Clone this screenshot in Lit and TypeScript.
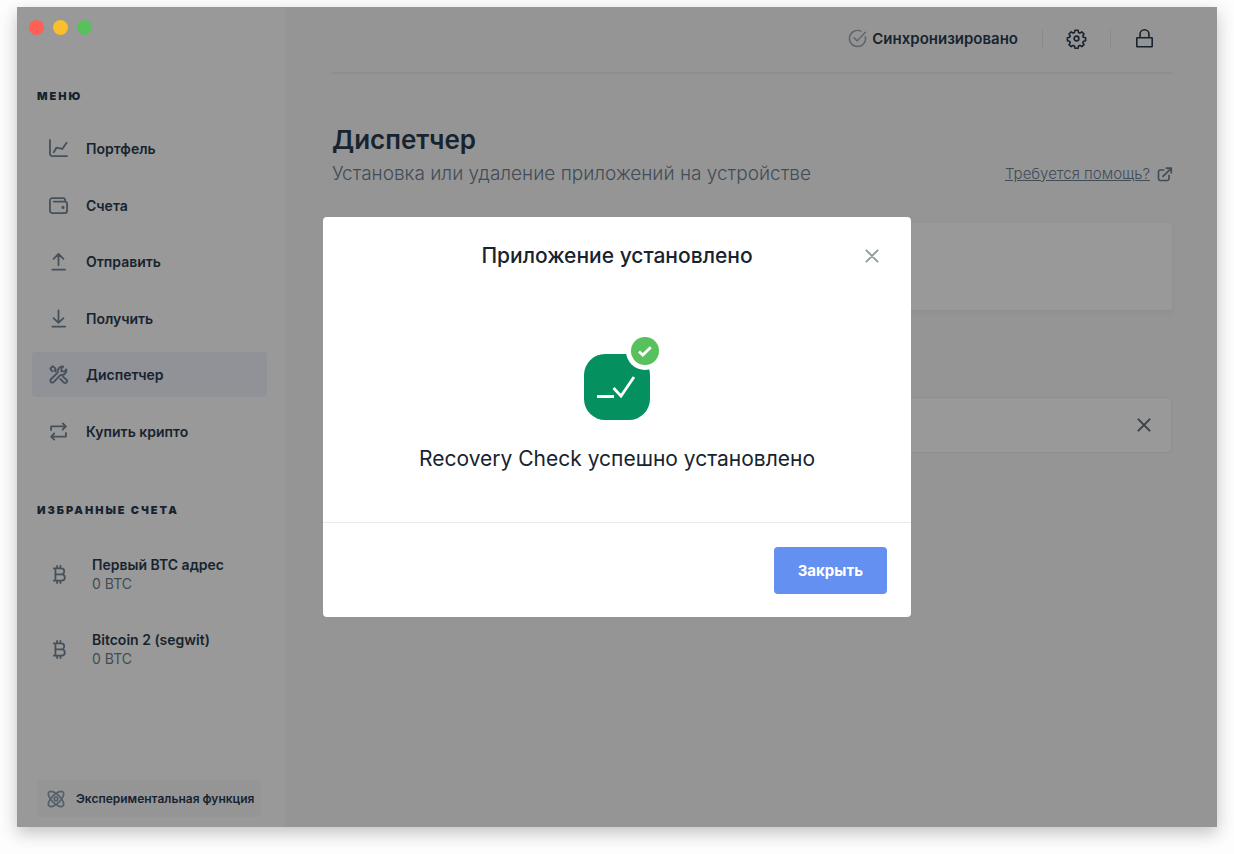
import { LitElement, html, css, svg, TemplateResult } from "lit";
import { customElement, property, state } from "lit/decorators.js";

const glyphs: Record<string, TemplateResult> = {
  portfolio: svg`<path d="M1 1v14.500a2.500 2.500 0 0 0 2.500 2.500H19M5 14l3-5 6 1.500L18.500 4"/>`,
  wallet: svg`<path d="M17 6V4.500a2.200 2.200 0 0 0-2.200-2.200H3.500A2.500 2.500 0 0 0 1 4.800v10.700a2.500 2.500 0 0 0 2.500 2.500h13a2.500 2.500 0 0 0 2.500-2.500V8.500A2.500 2.500 0 0 0 16.500 6H5"/><circle cx="14.700" cy="12" r=".7" fill="currentColor"/>`,
  send: svg`<path d="M10 14V2M4.800 7.200 10 2l5.200 5.200M3.500 18.500h13.500"/>`,
  receive: svg`<path d="M10 1.500V14.500M4.800 9.500 10 14.700l5.200-5.200M3.500 18.500h13.500"/>`,
  tools: svg`<path d="M9.200 8.100C8.500 4.500 11.200 1 15 1.600L13 3.700v3h3.200l2.100-2c.6 3.700-2.600 6.500-6.200 5.800L4.900 17.900a2 2 0 0 1-2.900-2.900ZM7 7 5.700 5.700M3.600 6.700 1.300 3.900 3.900 1.300l2.800 2.300.2 2M14.600 12.200l3.800 3.300a2 2 0 0 1-2.900 2.900l-3.700-3.800"/>`,
  swap: svg`<path d="M2.200 8.500V4.700h15.600M14.500 1.500l3.300 3.200-3.300 3.200M17.800 11.500v3.800H2.200M5.500 12.100l-3.300 3.200 3.300 3.200"/>`,
  bitcoin: svg`<path d="M4 3.500h7.800a3.200 3.200 0 0 1 0 6.400H5.500M4 16.500h8.300a3.300 3.300 0 0 0 0-6.600M5.700 3.500v13M7.500 1v2.500M11 1v2.500M7.500 16.500V19M11 16.500V19"/>`,
  atom: svg`<ellipse cx="10" cy="10" rx="11" ry="4.800" transform="rotate(45 10 10)"/><ellipse cx="10" cy="10" rx="11" ry="4.800" transform="rotate(-45 10 10)"/><circle cx="10" cy="10" r="2"/>`,
  synced: svg`<path d="M18.300 8.200A8.500 8.500 0 1 1 13.600 2.300M6.300 9.200l3.400 3.300 8.600-9"/>`,
  gear: svg`<path d="M8.400 1.300h3.200l.5 2.300 1.500.7 2-1.300 2.300 2.300-1.300 2 .7 1.400 2.300.6v3l-2.300.6-.7 1.500 1.300 2-2.300 2.200-2-1.300-1.500.7-.5 2.300H8.400l-.5-2.300-1.500-.7-2 1.300-2.300-2.200 1.300-2-.7-1.500-2.300-.6v-3l2.300-.6.7-1.400-1.300-2L4.400 3l2 1.300 1.500-.7Z"/><circle cx="10" cy="10" r="2.500"/>`,
  lock: svg`<path d="M2.500 9.200h15a.6.6 0 0 1 .6.6v8.300a.6.6 0 0 1-.6.6h-15a.6.6 0 0 1-.6-.6V9.800a.6.6 0 0 1 .6-.6ZM5.300 9V5.500a4.700 4.700 0 0 1 9.400 0V9"/>`,
  external: svg`<path d="M9 4H4.200A2.200 2.200 0 0 0 2 6.200v9.600A2.200 2.200 0 0 0 4.200 18h9.600a2.200 2.200 0 0 0 2.200-2.200V11M12.500 1.500H19V8M18.700 1.800 8 12.500"/>`,
  close: svg`<path d="m2 2 16 16M18 2 2 18"/>`,
};

@customElement("ui-icon")
class UiIcon extends LitElement {
  @property() name = "";
  @property({ type: Number }) size = 19;
  @property({ type: Number }) weight = 1.9;

  static styles = css`
    :host { display: inline-flex; flex: none; }
    .glyph {
      display: block;
      overflow: visible;
      fill: none;
      stroke: currentColor;
      stroke-linecap: round;
      stroke-linejoin: round;
    }
  `;

  render() {
    return html`<svg class="glyph" viewBox="0 0 20 20" width=${this.size} height=${this.size}
      stroke-width=${this.weight} aria-hidden="true">${glyphs[this.name]}</svg>`;
  }
}

@customElement("app-root")
class AppRoot extends LitElement {
  @state() private open = true;

  private menu = [
    { icon: "portfolio", label: "Портфель" },
    { icon: "wallet", label: "Счета" },
    { icon: "send", label: "Отправить" },
    { icon: "receive", label: "Получить" },
    { icon: "tools", label: "Диспетчер", active: true },
    { icon: "swap", label: "Купить крипто" },
  ];

  private accounts = [
    { name: "Первый BTC адрес", balance: "0 BTC" },
    { name: "Bitcoin 2 (segwit)", balance: "0 BTC" },
  ];

  static styles = css`
    :host {
      display: flex;
      box-sizing: border-box;
      min-height: 100vh;
      padding: 7px 17px 27px;
      background: #fdfdfd;
      color: #17242f;
      font-family: Inter, "Liberation Sans", sans-serif;
    }
    *, *::before, *::after { box-sizing: border-box; }
    h1, h2, p { margin: 0; padding: 0; }
    a { color: inherit; text-decoration: none; }
    button {
      display: inline-flex;
      align-items: center;
      justify-content: center;
      padding: 0;
      border: 0;
      background: none;
      color: inherit;
      font: inherit;
      cursor: pointer;
    }
    .window {
      position: relative;
      display: flex;
      flex: 1;
      background: #959595;
      box-shadow: 0 6px 16px rgba(0, 0, 0, 0.24);
    }
    .sidebar {
      display: flex;
      flex-direction: column;
      width: 268px;
      flex: none;
      background: #999;
    }
    .lights { display: flex; gap: 9px; padding: 13px 12px 0; }
    .light { width: 15px; height: 15px; border-radius: 50%; }
    .red { background: #ff5f57; }
    .yellow { background: #fbbf2e; }
    .green { background: #58c05c; }
    .caption {
      padding-left: 20px;
      font-size: 11px;
      line-height: 16px;
      font-weight: 900;
      letter-spacing: 2px;
      text-transform: uppercase;
    }
    .menu-caption { margin-top: 53px; }
    .menu {
      display: flex;
      flex-direction: column;
      justify-content: space-between;
      min-height: 328px;
      margin-top: 22px;
      padding: 0 18px 0 15px;
    }
    .item {
      display: flex;
      align-items: center;
      gap: 18px;
      height: 45px;
      padding-left: 17px;
      border-radius: 4px;
      font-size: 14px;
      font-weight: 600;
    }
    .item ui-icon, .account ui-icon { color: #47515b; }
    .active { background: #919198; }
    .fav-caption { margin-top: 48px; }
    .accounts { display: flex; flex-direction: column; gap: 37px; margin-top: 37px; }
    .account {
      display: flex;
      align-items: center;
      gap: 23px;
      padding-left: 33px;
      font-size: 14px;
      line-height: 19px;
      font-weight: 600;
    }
    .balance { font-weight: 400; color: #414c57; }
    .experimental {
      display: flex;
      align-items: center;
      gap: 11px;
      height: 37px;
      margin: auto 24px 10px 20px;
      padding-left: 10px;
      border-radius: 4px;
      background: #959595;
      font-size: 12px;
      font-weight: 600;
      white-space: nowrap;
    }
    .experimental ui-icon { color: #55606a; }
    .main { flex: 1; min-width: 0; padding: 0 45px 0 47px; }
    .topbar {
      display: flex;
      align-items: center;
      justify-content: flex-end;
      height: 67px;
      padding: 0 18px 2px 0;
      border-bottom: 2px solid #8e8e8e;
    }
    .sync {
      display: flex;
      align-items: center;
      gap: 5px;
      font-size: 15px;
      font-weight: 600;
    }
    .sync ui-icon { color: #5b656d; }
    .divider { width: 1px; height: 18px; margin: 0 24px; background: #898989; }
    .heading {
      display: flex;
      align-items: flex-end;
      justify-content: space-between;
      margin-top: 50px;
    }
    .title { font-size: 26px; line-height: 32px; font-weight: 600; }
    .subtitle {
      margin-top: 6px;
      font-size: 19px;
      line-height: 24px;
      font-weight: 300;
      color: #414c57;
    }
    .help {
      display: flex;
      align-items: center;
      gap: 7px;
      font-size: 15px;
      line-height: 24px;
      font-weight: 300;
      color: #414c57;
    }
    .help-text { text-decoration: underline; }
    .device {
      height: 87px;
      margin-top: 37px;
      border-radius: 4px;
      background: #999;
      box-shadow: 0 3px 6px rgba(0, 0, 0, 0.04);
    }
    .search {
      display: flex;
      align-items: center;
      justify-content: flex-end;
      height: 56px;
      margin-top: 87px;
      padding-right: 20px;
      border: 1px solid #8e8e8e;
      border-radius: 4px;
      background: #999;
      color: #37424c;
    }
    .overlay {
      position: absolute;
      inset: 0;
      display: flex;
      align-items: center;
      justify-content: center;
    }
    .modal {
      width: 588px;
      max-width: 100%;
      border-radius: 4px;
      background: #fff;
    }
    .modal-head {
      display: grid;
      grid-template-columns: 48px 1fr 48px;
      align-items: center;
      padding: 23px 15px 0;
    }
    .modal-title {
      grid-column: 2;
      font-size: 21px;
      line-height: 32px;
      font-weight: 500;
      text-align: center;
    }
    .dismiss { color: #90a09f; }
    .modal-body {
      display: flex;
      flex-direction: column;
      align-items: center;
      gap: 23px;
      padding: 64px 24px 47px;
    }
    .app-icon { display: block; }
    .message { font-size: 21px; line-height: 32px; font-weight: 400; text-align: center; }
    .modal-foot {
      display: flex;
      justify-content: flex-end;
      padding: 24px 24px 23px;
      border-top: 1px solid #e6eaea;
    }
    .primary {
      height: 47px;
      padding: 0 24px;
      border-radius: 4px;
      background: #6490f1;
      color: #fff;
      font-size: 15px;
      font-weight: 700;
    }
  `;

  private close() {
    this.open = false;
  }

  render() {
    return html`
      <div class="window">
        <aside class="sidebar">
          <div class="lights">
            <span class="light red"></span>
            <span class="light yellow"></span>
            <span class="light green"></span>
          </div>
          <h2 class="caption menu-caption">Меню</h2>
          <nav class="menu">
            ${this.menu.map((m) => html`
              <a class="item ${m.active ? "active" : ""}" href="#">
                <ui-icon name=${m.icon}></ui-icon><span>${m.label}</span>
              </a>`)}
          </nav>
          <h2 class="caption fav-caption">Избранные счета</h2>
          <div class="accounts">
            ${this.accounts.map((a) => html`
              <a class="account" href="#">
                <ui-icon name="bitcoin"></ui-icon>
                <div><p>${a.name}</p><p class="balance">${a.balance}</p></div>
              </a>`)}
          </div>
          <a class="experimental" href="#">
            <ui-icon name="atom" size="18"></ui-icon><span>Экспериментальная функция</span>
          </a>
        </aside>
        <main class="main">
          <header class="topbar">
            <div class="sync"><ui-icon name="synced" weight="1.5"></ui-icon><span>Синхронизировано</span></div>
            <span class="divider"></span>
            <button aria-label="Настройки"><ui-icon name="gear" weight="1.7"></ui-icon></button>
            <span class="divider"></span>
            <button aria-label="Заблокировать"><ui-icon name="lock" weight="1.7"></ui-icon></button>
          </header>
          <div class="heading">
            <div>
              <h1 class="title">Диспетчер</h1>
              <p class="subtitle">Установка или удаление приложений на устройстве</p>
            </div>
            <a class="help" href="#">
              <span class="help-text">Требуется помощь?</span>
              <ui-icon name="external" size="15" weight="2.2"></ui-icon>
            </a>
          </div>
          <section class="device"></section>
          <section class="search">
            <button aria-label="Очистить"><ui-icon name="close" size="14" weight="2.8"></ui-icon></button>
          </section>
        </main>
        ${this.open ? html`
          <div class="overlay">
            <div class="modal" role="dialog" aria-modal="true" aria-labelledby="modal-title">
              <div class="modal-head">
                <h2 class="modal-title" id="modal-title">Приложение установлено</h2>
                <button class="dismiss" aria-label="Закрыть окно" @click=${this.close}>
                  <ui-icon name="close" size="14" weight="2.8"></ui-icon>
                </button>
              </div>
              <div class="modal-body">
                <svg class="app-icon" width="84" height="84" viewBox="0 0 84 84" aria-hidden="true">
                  <rect x="9" y="18" width="66" height="66" rx="21" fill="#04915f"/>
                  <circle cx="70" cy="15" r="19" fill="#fff"/>
                  <circle cx="70" cy="15" r="14" fill="#58c05c"/>
                  <path d="m64 15.500 3.800 3.500 8-7.800" fill="none" stroke="#fff" stroke-width="2.800"/>
                  <path d="M22 60.500h17M38.500 52l7.500 8 13-19" fill="none" stroke="#fff" stroke-width="2.800"/>
                </svg>
                <p class="message">Recovery Check успешно установлено</p>
              </div>
              <div class="modal-foot">
                <button class="primary" @click=${this.close}>Закрыть</button>
              </div>
            </div>
          </div>` : ""}
      </div>
    `;
  }
}
